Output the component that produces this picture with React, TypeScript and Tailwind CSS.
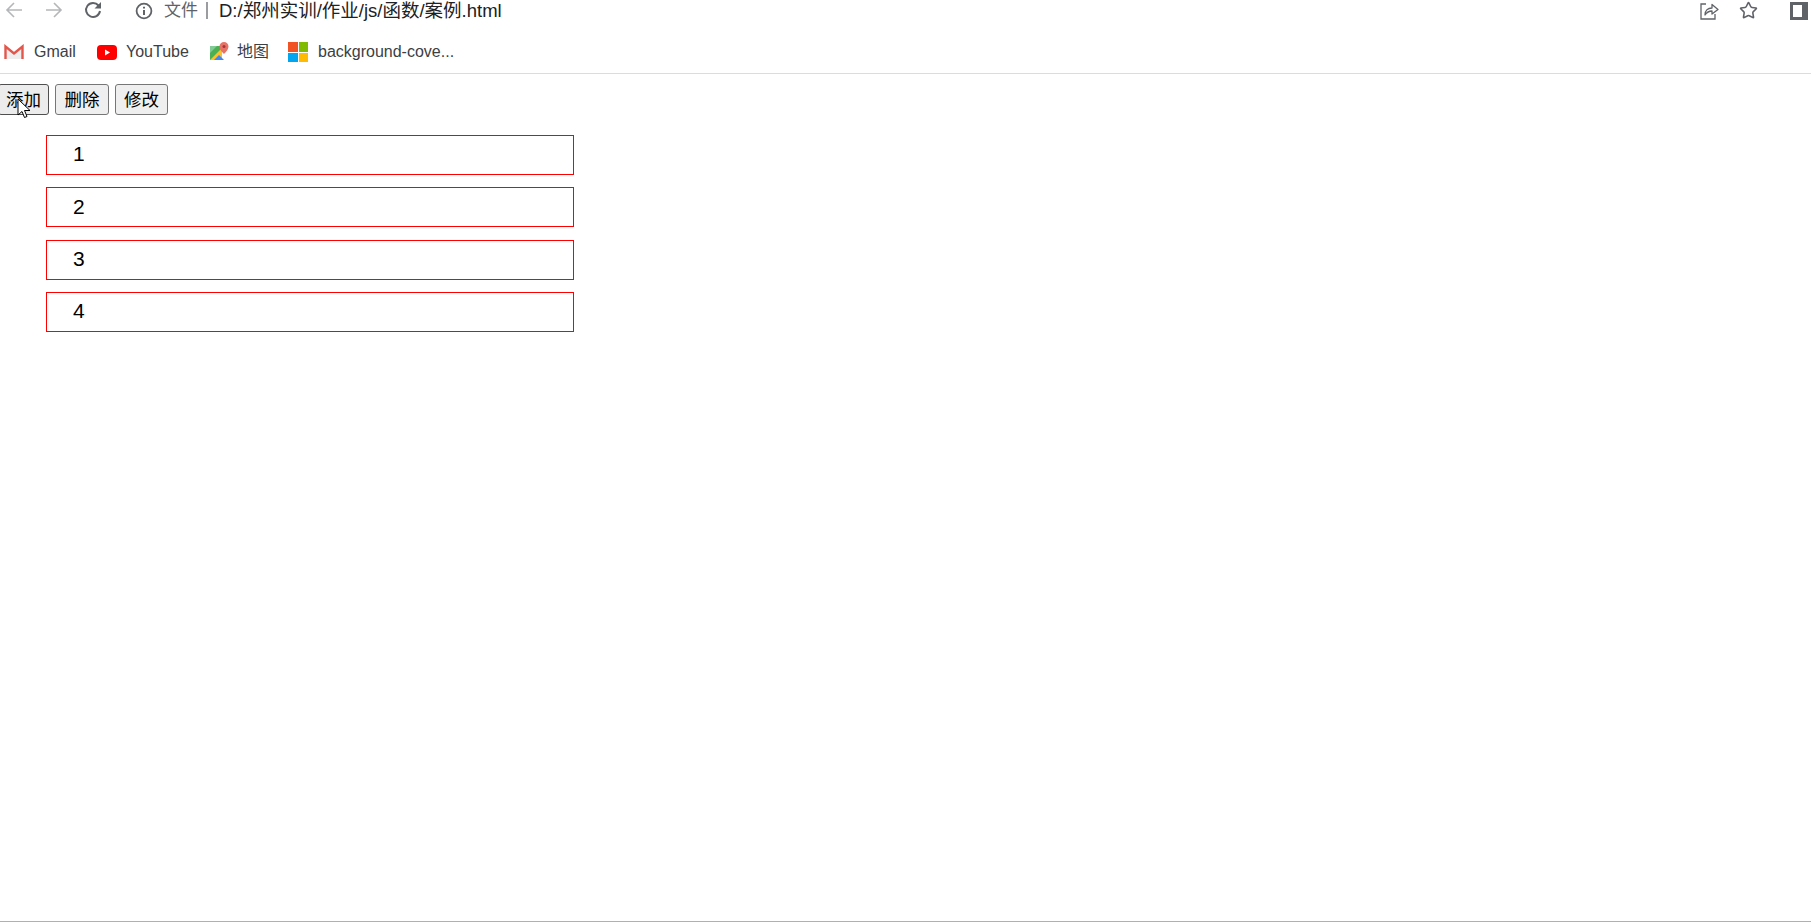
import { Star } from "lucide-react";

const CJK = "font-['Liberation_Sans','Noto_Sans_CJK_SC',sans-serif]";

function GmailIcon() {
  return (
    <svg width="20" height="16" viewBox="0 0 20 16" className="shrink-0">
      <path d="M1 15V3l9 7 9-7v12" fill="#eeeeee" />
      <path d="M1.500 15V2.500L10 9.500l8.500-7V15" fill="none" stroke="#e2574c" strokeWidth="2.400" />
    </svg>
  );
}

function YoutubeIcon() {
  return (
    <svg width="20" height="15" viewBox="0 0 20 15" className="shrink-0">
      <rect width="20" height="15" rx="4" fill="#ff0000" />
      <path d="M8 4.500v6l5-3z" fill="#fff" />
    </svg>
  );
}

function MapsIcon() {
  return (
    <svg width="20" height="20" viewBox="0 0 20 20" className="shrink-0">
      <path d="M1 4h12v14H1z" fill="#4caf50" />
      <path d="M1 18 13 6v12z" fill="#fbc02d" />
      <path d="M5 18l5-5 5 5z" fill="#4285f4" />
      <path d="M1 4h7L1 11z" fill="#81c995" />
      <path d="M15 0a4.500 4.500 0 0 0-4.500 4.500C10.500 8 15 12 15 12s4.500-4 4.500-7.500A4.500 4.500 0 0 0 15 0z" fill="#e57368" />
      <circle cx="15" cy="4.500" r="1.500" fill="#a33" />
    </svg>
  );
}

function WindowsIcon() {
  return (
    <div className="grid grid-cols-2 gap-px w-5 h-5 shrink-0">
      <div className="bg-[#f25325]" />
      <div className="bg-[#80bb01]" />
      <div className="bg-[#01a5f0]" />
      <div className="bg-[#ffba03]" />
    </div>
  );
}

function ShareIcon() {
  return (
    <svg width="20" height="20" viewBox="0 0 20 20" fill="none" stroke="#5f6368" strokeWidth="1.300" className="shrink-0">
      <path d="M7 3H2v15h14v-5" />
      <path d="M6 14c0-5 3-7 7-7V3.500L19 8.500l-6 4.500V10c-3 0-5 1-7 4z" strokeLinejoin="round" />
    </svg>
  );
}

function BackIcon({ flip }: { flip?: boolean }) {
  return (
    <svg width="18" height="16" viewBox="0 0 18 16" fill="none" stroke="#b4b6b9" strokeWidth="1.600" className={flip ? "shrink-0 -scale-x-100" : "shrink-0"}>
      <path d="M17 8H2M9 1 2 8l7 7" />
    </svg>
  );
}

function ReloadIcon() {
  return (
    <svg width="18" height="18" viewBox="0 0 18 18" className="shrink-0">
      <path d="M14.500 4.500A7 7 0 1 0 16 10" fill="none" stroke="#5f6368" strokeWidth="2" />
      <path d="M17 1v6.500h-6.500z" fill="#5f6368" />
    </svg>
  );
}

const BOOKMARKS = [
  { label: "Gmail", icon: <GmailIcon />, gap: "gap-[10px]", width: "w-[93px]" },
  { label: "YouTube", icon: <YoutubeIcon />, gap: "gap-[9px]", width: "w-[112px]" },
  { label: "地图", icon: <MapsIcon />, gap: "gap-[8px]", width: "w-[79px]" },
  { label: "background-cove...", icon: <WindowsIcon />, gap: "gap-[10px]", width: "w-[190px]" },
];

const BUTTON = "h-[31px] pt-[2px] text-[17.5px] leading-none text-black rounded-[3px] border";

export default function App() {
  return (
    <div className={`relative flex flex-col h-screen bg-white overflow-hidden ${CJK}`}>
      {/* Browser chrome */}
      <header className="h-[74px] shrink-0 border-b border-[#dcdcdc] flex flex-col">
        <div className="h-[21px] flex items-center">
          <div className="ml-[5px] mt-[-1px]"><BackIcon /></div>
          <div className="ml-[22px] mt-[-1px]"><BackIcon flip /></div>
          <div className="ml-[21px] mt-[-1px]"><ReloadIcon /></div>
          <svg width="18" height="18" viewBox="0 0 18 18" className="ml-[33px] shrink-0">
            <circle cx="9" cy="9" r="7.400" fill="none" stroke="#5f6368" strokeWidth="1.800" />
            <path d="M9 8v5M9 4.700v1.800" stroke="#5f6368" strokeWidth="2" />
          </svg>
          <span className="ml-[11px] text-[17px] text-[#5f6368]">文件</span>
          <span className="ml-[8px] w-[2px] h-[17px] bg-[#9a9ca0]" />
          <span className="ml-[11px] text-[18.5px] text-[#202124]">D:/郑州实训/作业/js/函数/案例.html</span>
          <div className="ml-auto flex items-center">
            <ShareIcon />
            <Star className="w-[19px] h-[19px] ml-[20px] text-[#5f6368]" strokeWidth={2} />
            <div className="w-[18px] h-[18px] ml-[32px] mr-[3px] bg-[#5f6368] p-[3px] pr-[6px]">
              <div className="w-full h-full bg-white" />
            </div>
          </div>
        </div>
        <nav className="flex items-center h-[20px] mt-[21px] ml-[4px]">
          {BOOKMARKS.map((b) => (
            <div key={b.label} className={`flex items-center ${b.gap} ${b.width} shrink-0`}>
              {b.icon}
              <span className="text-[16px] leading-none text-[#3c4043] whitespace-nowrap">{b.label}</span>
            </div>
          ))}
        </nav>
      </header>

      {/* Page content */}
      <main className="flex-1 min-h-0">
        <div className="flex gap-[6px] mt-[10px] -ml-[2px]">
          <button className={`${BUTTON} w-[51px] bg-[#ececec] border-[#4f4f4f]`}>添加</button>
          <button className={`${BUTTON} w-[54px] bg-[#efefef] border-[#767676]`}>删除</button>
          <button className={`${BUTTON} w-[53px] bg-[#efefef] border-[#767676]`}>修改</button>
        </div>
        <ul className="mt-[20px] ml-[46px] w-[528px] flex flex-col gap-[12.33px]">
          {[1, 2, 3, 4].map((n) => (
            <li key={n} className="h-[40px] border border-[#ff0000] pl-[26px] pb-[2px] flex items-center text-[21px] text-black">
              {n}
            </li>
          ))}
        </ul>
      </main>

      <div className="h-px shrink-0 bg-[#b0b0b0]" />

      {/* Mouse pointer */}
      <svg width="14" height="21" viewBox="0 0 14 21" className="absolute left-[17px] top-[98px]">
        <path d="M1 1v16l4-3.500 2.500 6 2.500-1-2.500-6H13z" fill="#fff" stroke="#000" strokeWidth="1" />
      </svg>
    </div>
  );
}
